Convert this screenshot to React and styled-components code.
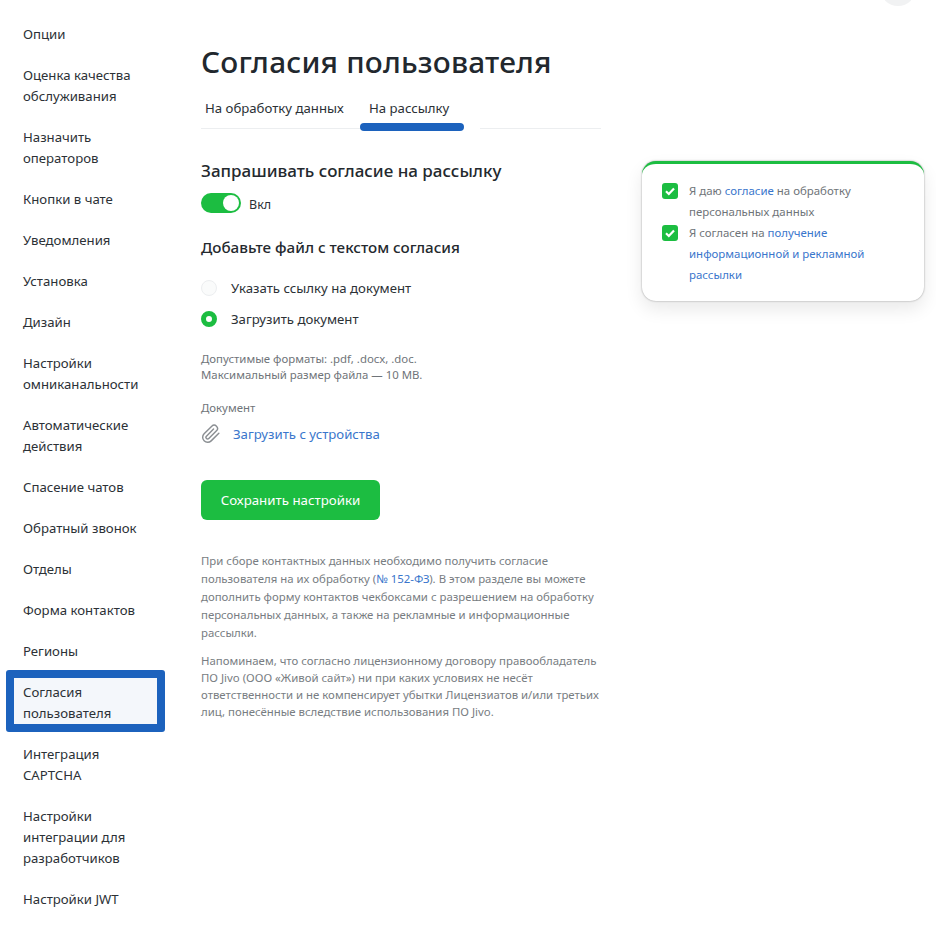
import React from "react";
import styled, { createGlobalStyle } from "styled-components";

const Global = createGlobalStyle`
  html, body { margin: 0; padding: 0; background: #fff; }
  body { font-family: "Noto Sans", "Open Sans", sans-serif; color: #24292e; }
`;
const Page = styled.div`
  position: relative; width: 936px; height: 939px; overflow: hidden;
  display: flex; align-items: flex-start;
`;
const TopCircle = styled.div`
  position: absolute; left: 880px; top: -30px; width: 36px; height: 36px;
  border-radius: 50%; background: #f1f2f3;
`;
const Sidebar = styled.nav`
  width: 143px; margin-left: 14px; padding-top: 22px; flex: none;
  display: flex; flex-direction: column; gap: 16px;
`;
const NavItem = styled.div`
  padding: 2px 9px; font-size: 13.2px; line-height: 21px; color: #2c3136;
  ${p => p.$active && `
    background: #f4f7fb;
    border: 8px solid #1c62bd;
    border-radius: 3px;
    padding: 4px 9px 0;
    margin: -10px -8px -6px;
  `}
`;
const Main = styled.main`
  width: 400px; margin-left: 44px; flex: none; padding-top: 39px;
`;
const Title = styled.h1`
  margin: 0; font-size: 29.8px; line-height: 46px; font-weight: 500; color: #22282e; letter-spacing: .2px;
`;
const Tabs = styled.div`
  display: flex; height: 44px;
`;
const Tab = styled.div`
  box-sizing: border-box; height: 44px; padding: 13px 0 0 ${p => p.$pl}px;
  font-size: 13.2px; line-height: 21px; color: #2c3136; position: relative;
  width: ${p => p.$w}px; border-bottom: 1px solid #eceef0;
  ${p => p.$active && `
    border-bottom: none;
    &::after { content: ""; position: absolute; left: 0; right: 0; bottom: -2px; height: 8px; border-radius: 4px; background: #1c62bd; }
  `}
`;
const TabFill = styled.div`
  flex: 1; margin-left: 16px; height: 44px; box-sizing: border-box; border-bottom: 1px solid #eceef0;
`;
const SectionTitle = styled.h2`
  margin: ${p => p.$mt}px 0 0; font-size: ${p => p.$fs}px; line-height: 24px; font-weight: 500; color: #24292e;
`;
const SwitchRow = styled.div`
  display: flex; align-items: center; gap: 8px; margin-top: 10px; height: 20px;
`;
const SwitchLabel = styled.span`
  font-size: 12.5px; line-height: 20px; padding-top: 3px; color: #2c3136;
`;
const Switch = styled.div`
  width: 40px; height: 20px; border-radius: 10px; background: #1cbd41; position: relative;
  &::after { content: ""; position: absolute; right: 2px; top: 2px; width: 16px; height: 16px; border-radius: 50%; background: #fff; }
`;
const Radio = styled.div`
  display: flex; align-items: center; gap: 14px; height: 21px; margin-top: ${p => p.$mt}px;
  font-size: 13.2px; color: #2c3136;
`;
const RadioDot = styled.span`
  box-sizing: border-box; width: 16px; height: 16px; border-radius: 50%; flex: none;
  ${p => p.$on ? `background: #fff; border: 5px solid #1cbd41;` : `background: #fafbfb; border: 1px solid #eceef0;`}
`;
const Hint = styled.p`
  margin: ${p => p.$mt}px 0 0; font-size: 11.4px; line-height: 15.5px; color: #6f7479;
`;
const UploadRow = styled.div`
  display: flex; align-items: center; gap: 12px; margin-top: 6px; height: 24px;
  font-size: 13.2px; color: #3a76cc;
`;
const SaveButton = styled.button`
  display: block; margin-top: 34px; width: 179px; height: 40px; border: 0; border-radius: 6px;
  background: #1cbd41; color: #fff; font: 400 13.3px "Noto Sans", sans-serif; padding: 0;
`;
const Note = styled.p`
  margin: ${p => p.$mt}px 0 0; font-size: 11.4px; line-height: ${p => p.$lh}px; color: #787d82; white-space: nowrap;
`;
const A = styled.span`
  color: #3a76cc;
`;
const Card = styled.aside`
  box-sizing: border-box; width: 282px; height: 140px; margin: 161px 0 0 41px; flex: none;
  background: #fff; border-radius: 14px; border-top: 3px solid #1cbd41;
  box-shadow: 0 0 2px rgba(0,0,0,.4), 0 8px 18px rgba(0,0,0,.09);
  padding: 16px 20px 0; display: flex; flex-direction: column;
`;
const ConsentRow = styled.div`
  display: flex; gap: 11px; font-size: 11.45px; line-height: 21px; color: #6f7479;
`;
const Check = styled.span`
  width: 16px; height: 16px; border-radius: 3px; background: #1cbd41; flex: none; margin-top: 3px;
  display: flex; align-items: center; justify-content: center;
`;

const nav = ["Опции", "Оценка качества обслуживания", "Назначить операторов", "Кнопки в чате", "Уведомления", "Установка", "Дизайн", "Настройки омниканальности", "Автоматические действия", "Спасение чатов", "Обратный звонок", "Отделы", "Форма контактов", "Регионы", "Согласия пользователя", "Интеграция CAPTCHA", "Настройки интеграции для разработчиков", "Настройки JWT"];

const Tick = () => (
  <svg width="12" height="12" viewBox="0 0 12 12" fill="none"><path d="M2 6.3 4.8 9 10 3.4" stroke="#fff" strokeWidth="2.2" /></svg>
);
const Clip = () => (
  <svg width="20" height="20" viewBox="0 0 24 24" fill="none" stroke="#8a8e92" strokeWidth="1.7" strokeLinecap="round" strokeLinejoin="round" style={{ flex: "none" }}>
    <path d="M21.4 11.05 12.2 20.25a6 6 0 0 1-8.48-8.49l9.19-9.19a4 4 0 0 1 5.66 5.66l-9.2 9.19a2 2 0 0 1-2.83-2.83l8.49-8.48" />
  </svg>
);

export default function App() {
  return (
    <Page>
      <Global />
      <TopCircle />
      <Sidebar>
        {nav.map(n => <NavItem key={n} $active={n === "Согласия пользователя"}>{n}</NavItem>)}
      </Sidebar>
      <Main>
        <Title>Согласия пользователя</Title>
        <Tabs>
          <Tab $w={159} $pl={4}>На обработку данных</Tab>
          <Tab $w={104} $pl={9} $active>На рассылку</Tab>
          <TabFill />
        </Tabs>
        <SectionTitle $mt={30} $fs={17}>Запрашивать согласие на рассылку</SectionTitle>
        <SwitchRow><Switch /><SwitchLabel>Вкл</SwitchLabel></SwitchRow>
        <SectionTitle $mt={22} $fs={15.2}>Добавьте файл с текстом согласия</SectionTitle>
        <Radio $mt={18}><RadioDot />Указать ссылку на документ</Radio>
        <Radio $mt={10}><RadioDot $on />Загрузить документ</Radio>
        <Hint $mt={22}>Допустимые форматы: .pdf, .docx, .doc.<br />Максимальный размер файла — 10 MB.</Hint>
        <Hint $mt={18}>Документ</Hint>
        <UploadRow><Clip />Загрузить с устройства</UploadRow>
        <SaveButton>Сохранить настройки</SaveButton>
        <Note $mt={32} $lh={18}>При сборе контактных данных необходимо получить согласие<br />пользователя на их обработку (<A>№ 152-ФЗ</A>). В этом разделе вы можете<br />дополнить форму контактов чекбоксами с разрешением на обработку<br />персональных данных, а также на рекламные и информационные<br />рассылки.</Note>
        <Note $mt={10} $lh={17}>Напоминаем, что согласно лицензионному договору правообладатель<br />ПО Jivo (ООО «Живой сайт») ни при каких условиях не несёт<br />ответственности и не компенсирует убытки Лицензиатов и/или третьих<br />лиц, понесённые вследствие использования ПО Jivo.</Note>
      </Main>
      <Card>
        <ConsentRow><Check><Tick /></Check><div>Я даю <A>согласие</A> на обработку<br />персональных данных</div></ConsentRow>
        <ConsentRow><Check><Tick /></Check><div>Я согласен на <A>получение<br />информационной и рекламной<br />рассылки</A></div></ConsentRow>
      </Card>
    </Page>
  );
}
